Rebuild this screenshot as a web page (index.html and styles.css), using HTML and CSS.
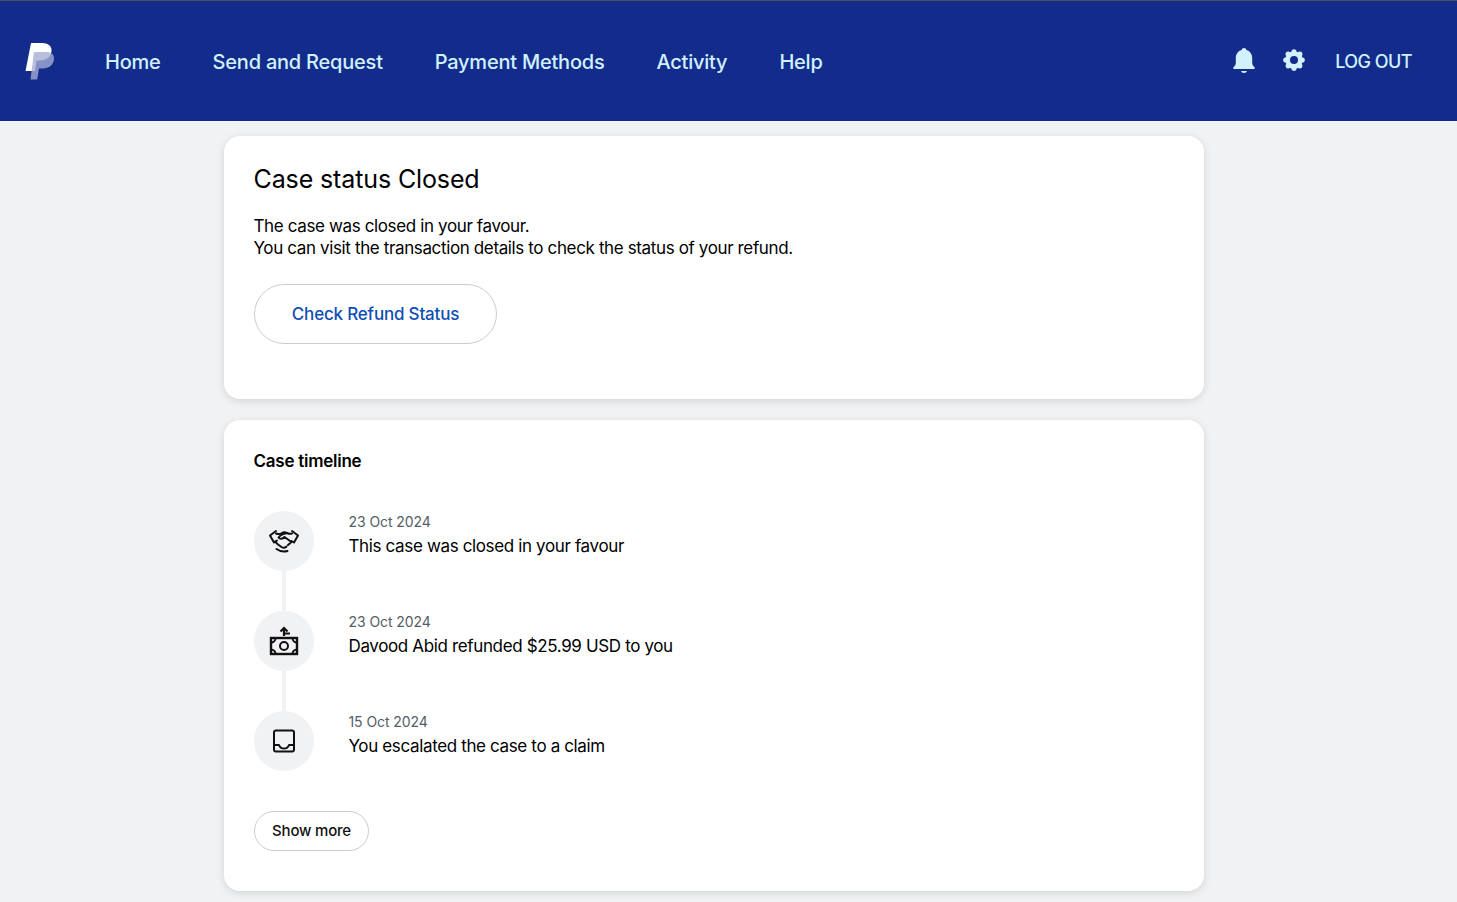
FILE: index.html
```html
<!DOCTYPE html>
<html lang="en">
<head>
  <meta charset="UTF-8">
  <meta name="viewport" content="width=device-width, initial-scale=1.0">
  <title>Case details</title>
  <link rel="stylesheet" href="styles.css">
</head>
<body>
  <header class="topbar">
    <a class="logo" href="#">
      <svg width="30" height="37" viewBox="0 0 30 37">
        <path fill="#fff" d="M6 0h11c6 0 10 3 9.500 8-.6 6-5 9.500-11 9.500h-4L10 28H0.500z"/>
        <path fill="#a5aed4" fill-opacity="0.79" d="M9 9h12c5 0 8.500 2.500 8 7-.6 6-5 9.500-11 9.500h-4L12.200 36.500H5.500z"/>
      </svg>
    </a>
    <nav class="main-nav">
      <a href="#">Home</a>
      <a href="#">Send and Request</a>
      <a href="#">Payment Methods</a>
      <a href="#">Activity</a>
      <a href="#">Help</a>
    </nav>
    <div class="top-actions">
      <svg class="bell" width="22" height="26" viewBox="0 0 22 26">
        <path fill="#d1f1ff" d="M11 0c1.300 0 2.200.8 2.400 2 3.700 1 5.800 4 5.800 8v5c0 1.700.9 3 2.300 4.300.6.600.3 1.700-.7 1.700H1.200c-1 0-1.300-1.100-.7-1.700C1.900 18 2.800 16.700 2.800 15v-5c0-4 2.100-7 5.800-8C8.800.8 9.700 0 11 0z"/>
        <path fill="#d1f1ff" d="M8 23h6c-.4 1.300-1.500 2-3 2s-2.600-.7-3-2z"/>
      </svg>
      <svg class="gear" width="22" height="22" viewBox="0 0 24 24">
        <circle cx="12" cy="12" r="9.500" fill="#d1f1ff"/>
        <circle cx="12" cy="3" r="2.800" fill="#d1f1ff"/>
        <circle cx="12" cy="21" r="2.800" fill="#d1f1ff"/>
        <circle cx="3" cy="12" r="2.800" fill="#d1f1ff"/>
        <circle cx="21" cy="12" r="2.800" fill="#d1f1ff"/>
        <circle cx="5.600" cy="5.600" r="2.800" fill="#d1f1ff"/>
        <circle cx="18.400" cy="5.600" r="2.800" fill="#d1f1ff"/>
        <circle cx="5.600" cy="18.400" r="2.800" fill="#d1f1ff"/>
        <circle cx="18.400" cy="18.400" r="2.800" fill="#d1f1ff"/>
        <circle cx="12" cy="12" r="4.400" fill="#132c8c"/>
      </svg>
      <a class="logout" href="#">LOG OUT</a>
    </div>
  </header>

  <main class="content">
    <section class="card status-card">
      <h1>Case status Closed</h1>
      <p>The case was closed in your favour.<br>You can visit the transaction details to check the status of your refund.</p>
      <a class="btn-refund" href="#">Check Refund Status</a>
    </section>

    <section class="card timeline-card">
      <h2>Case timeline</h2>
      <ul class="timeline">
        <li class="event">
          <span class="event-icon">
            <svg width="32" height="24" viewBox="0 0 32 24" fill="none" stroke="#111" stroke-width="2" stroke-linejoin="round" stroke-linecap="round">
              <path d="M8 2 2 6.500l4 7 3-2"/>
              <path d="M24 2l6 4.500-4 7-2.500-1.500"/>
              <path d="M8 4.500c2.500 1 4.500.5 6-.5 1.500-1 3-1 5 0 1.500.8 3 1 5 .5"/>
              <path d="M18 4.500c-3 0-5.500 1.500-7.500 4 1.500 2 4 1.500 6-.5l7 5-3.500 3"/>
              <path d="M7 12.500l3 3 3.500 2.500c1.500 1 3.500 1 5-.5"/>
              <path d="M8.500 20c3.500 2.500 7.500 3 11 2"/>
            </svg>
          </span>
          <div class="event-text">
            <div class="event-date">23 Oct 2024</div>
            <div class="event-desc">This case was closed in your favour</div>
          </div>
        </li>
        <li class="event">
          <span class="event-icon">
            <svg width="30" height="30" viewBox="0 0 30 30" fill="none" stroke="#111" stroke-width="2">
              <path d="M15 10V2.500M11.500 5.500 15 2l3.500 3.500M15 7.500h6" stroke-width="2.200"/>
              <rect x="2" y="12" width="26" height="16" stroke-width="2.400"/>
              <circle cx="15" cy="20" r="4"/>
              <path d="M2 16.500c2.500 0 4.500-2 4.500-4.500M28 16.500c-2.500 0-4.500-2-4.500-4.500M2 23.500c2.500 0 4.500 2 4.500 4.500M28 23.500c-2.500 0-4.500 2-4.500 4.500"/>
            </svg>
          </span>
          <div class="event-text">
            <div class="event-date">23 Oct 2024</div>
            <div class="event-desc">Davood Abid refunded $25.99 USD to you</div>
          </div>
        </li>
        <li class="event">
          <span class="event-icon">
            <svg width="24" height="24" viewBox="0 0 24 24" fill="none" stroke="#111" stroke-width="2" stroke-linejoin="round">
              <rect x="2" y="1.500" width="20" height="21" rx="2"/>
              <path d="M2 16h5c1 3 3 3.500 5 3.500s4-.5 5-3.500h5"/>
            </svg>
          </span>
          <div class="event-text">
            <div class="event-date">15 Oct 2024</div>
            <div class="event-desc">You escalated the case to a claim</div>
          </div>
        </li>
      </ul>
      <a class="btn-more" href="#">Show more</a>
    </section>
  </main>
</body>
</html>
```

FILE: styles.css
```css
* {
  box-sizing: border-box;
}

body {
  margin: 0;
  background-color: #f1f2f4;
  font-family: Inter, "Liberation Sans", sans-serif;
  color: #000;
}

a {
  text-decoration: none;
}

.topbar {
  display: flex;
  align-items: center;
  height: 121px;
  padding: 0 45px 0 25px;
  background-color: #132c8c;
  border-top: 1px solid #4a4f5c;
}

.logo {
  display: flex;
  width: 30px;
  height: 37px;
  margin-top: 1px;
}

.main-nav {
  display: flex;
  gap: 52px;
  margin-left: 50px;
  padding-top: 2px;
  font-size: 20px;
  font-weight: 500;
  letter-spacing: -0.22px;
}

.main-nav a {
  color: #d1f1ff;
}

.top-actions {
  display: flex;
  align-items: center;
  margin-left: auto;
  padding-bottom: 1px;
}

.bell {
  margin-left: 1px;
}

.gear {
  margin-left: 28px;
  margin-bottom: 2px;
}

.logout {
  margin-left: 30px;
  margin-top: 2px;
  color: #d1f1ff;
  font-size: 18px;
  font-weight: 500;
  letter-spacing: -0.55px;
}

.content {
  display: flex;
  flex-direction: column;
  gap: 21px;
  width: 980px;
  margin-left: 224px;
  padding: 15px 0 11px;
}

.card {
  background-color: #fff;
  border-radius: 16px;
  box-shadow: 0 2px 8px rgba(0, 0, 0, 0.12);
  padding: 0 30px;
}

.status-card {
  height: 263px;
  padding-top: 27px;
}

h1 {
  margin: 0 0 0 -0.5px;
  font-size: 25px;
  font-weight: 400;
  line-height: 32px;
  letter-spacing: -0.12px;
}

.status-card p {
  margin: 20px 0 0 -0.5px;
  font-size: 17px;
  line-height: 22px;
  letter-spacing: -0.37px;
}

.btn-refund {
  display: flex;
  align-items: center;
  justify-content: center;
  width: 243px;
  height: 60px;
  margin-top: 25px;
  border: 1px solid #c9cdd3;
  border-radius: 30px;
  color: #0f4fb4;
  font-size: 17px;
  font-weight: 500;
  letter-spacing: -0.19px;
}

.timeline-card {
  height: 471px;
  padding-top: 30px;
}

h2 {
  margin: 0 0 0 -0.5px;
  font-size: 17px;
  font-weight: 600;
  line-height: 22px;
  letter-spacing: -0.25px;
}

.timeline {
  display: flex;
  flex-direction: column;
  gap: 40px;
  margin: 39px 0 0;
  padding: 0;
  list-style: none;
}

.event {
  position: relative;
  display: flex;
  gap: 34.5px;
  height: 60px;
}

/* connector down to the next icon */
.event:not(:last-child)::after {
  content: "";
  position: absolute;
  left: 28px;
  top: 60px;
  width: 4px;
  height: 40px;
  background-color: #f1f2f4;
}

.event-icon {
  display: flex;
  align-items: center;
  justify-content: center;
  flex: none;
  width: 60px;
  height: 60px;
  border-radius: 50%;
  background-color: #f1f2f4;
}

.event-text {
  padding-top: 1px;
}

.event-date {
  color: #545d68;
  font-size: 14px;
  line-height: 20px;
  letter-spacing: -0.07px;
}

.event-desc {
  margin-top: 2px;
  font-size: 17px;
  line-height: 24px;
  letter-spacing: -0.36px;
}

.btn-more {
  display: flex;
  align-items: center;
  justify-content: center;
  width: 115px;
  height: 40px;
  margin-top: 40px;
  padding-bottom: 1px;
  border: 1px solid #c9cdd3;
  border-radius: 20px;
  color: #111;
  font-size: 15px;
  font-weight: 500;
  letter-spacing: -0.2px;
}
```
